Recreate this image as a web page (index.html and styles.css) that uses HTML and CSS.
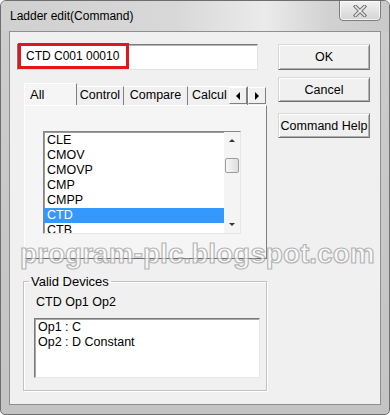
FILE: index.html
```html
<!DOCTYPE html>
<html lang="en">
<head>
    <meta charset="UTF-8">
    <meta name="viewport" content="width=device-width, initial-scale=1.0">
    <title>Ladder edit(Command)</title>
    <link rel="stylesheet" href="styles.css">
</head>
<body>
    <div class="window">
        <div class="titlebar">
            <span class="title">Ladder edit(Command)</span>
            <button class="close" aria-label="Close">
                <svg width="14" height="12" viewBox="0 0 14 12">
                    <path d="M2.5 1.5 L11.5 10.5 M11.5 1.5 L2.5 10.5" stroke="#6d6d6d" stroke-width="3.6" stroke-linecap="square" fill="none"/>
                    <path d="M2.5 1.5 L11.5 10.5 M11.5 1.5 L2.5 10.5" stroke="#ececec" stroke-width="1.6" stroke-linecap="square" fill="none"/>
                </svg>
            </button>
        </div>

        <div class="client">
            <div class="main-col">
                <div class="command-field">
                    <input class="command" type="text" value="CTD C001 00010">
                    <span class="highlight"></span>
                </div>

                <div class="tabs">
                    <div class="tab-strip">
                        <div class="tab active">All</div>
                        <div class="tab tab-control">Control</div>
                        <div class="tab tab-compare">Compare</div>
                        <div class="tab tab-calcul">Calcul</div>
                        <div class="tab-scroll">
                            <span class="arrow-btn"><span class="tri-left"></span></span>
                            <span class="arrow-btn"><span class="tri-right"></span></span>
                        </div>
                    </div>
                    <div class="tab-panel">
                        <div class="listbox">
                            <ul class="items">
                                <li>CLE</li>
                                <li>CMOV</li>
                                <li>CMOVP</li>
                                <li>CMP</li>
                                <li>CMPP</li>
                                <li class="selected">CTD</li>
                                <li>CTB</li>
                            </ul>
                            <div class="scrollbar">
                                <span class="sb-btn"><span class="tri-up"></span></span>
                                <div class="sb-track"><span class="thumb"></span></div>
                                <span class="sb-btn"><span class="tri-down"></span></span>
                            </div>
                        </div>
                    </div>
                </div>

                <fieldset class="devices">
                    <legend>Valid Devices</legend>
                    <p class="syntax">CTD Op1 Op2</p>
                    <div class="ops">
                        <div>Op1 : C</div>
                        <div>Op2 : D Constant</div>
                    </div>
                </fieldset>
            </div>

            <div class="buttons">
                <button class="btn">OK</button>
                <button class="btn btn-cancel">Cancel</button>
                <button class="btn btn-help">Command Help</button>
            </div>
        </div>

        <div class="watermark">program-plc.blogspot.com</div>
    </div>
</body>
</html>
```

FILE: styles.css
```css
body {
    margin: 0;
    font-family: "Liberation Sans", Arial, sans-serif;
    font-size: 12px;
    color: #000;
    background: #fff;
}

.window {
    position: relative;
    width: 388px;
    height: 413px;
    border: 1px solid #6e6e6e;
    border-radius: 6px 6px 5px 5px;
    background: linear-gradient(#cdcdcd, #c4c4c4);
    overflow: hidden;
    display: flex;
    flex-direction: column;
}

.titlebar {
    height: 30px;
    display: flex;
    justify-content: space-between;
    align-items: flex-start;
    padding-left: 9px;
    background: linear-gradient(to right, #d0d0d0, #d8d8d8 45%, #ebebeb 68%, #d2d2d2 84%, #c9c9c9);
}

.title {
    font-size: 12px;
    line-height: 30px;
}

.close {
    width: 42px;
    height: 21px;
    margin: -1px 8px 0 0;
    padding: 0;
    border: 1px solid #7d7d7d;
    border-radius: 0 0 4px 4px;
    background: linear-gradient(#f2f2f2, #d4d4d4);
    box-shadow: inset 0 0 0 1px rgba(255, 255, 255, 0.7);
    display: flex;
    align-items: center;
    justify-content: center;
}

.client {
    box-sizing: border-box;
    height: 374px;
    margin: 0 8px;
    border: 1px solid #8f8f8f;
    background: #f0f0f0;
    display: flex;
    gap: 11px;
    padding: 12px 0 0 7px;
}

.main-col {
    width: 250px;
    display: flex;
    flex-direction: column;
}

/* command line */
.command-field {
    position: relative;
    width: 241px;
}

.command {
    box-sizing: border-box;
    width: 241px;
    height: 26px;
    margin: 0;
    padding: 0 0 3px 8px;
    border: 1px solid;
    border-color: #7a7a7a #e2e2e2 #e2e2e2 #7a7a7a;
    box-shadow: inset 1px 1px 0 #b4b4b4;
    background: #fff;
    font-family: inherit;
    font-size: 12px;
    color: #000;
    outline: none;
}

.highlight {
    position: absolute;
    left: 1px;
    top: -1px;
    width: 111px;
    height: 26px;
    box-sizing: border-box;
    border: 3px solid #e3161d;
}

/* tab control */
.tabs {
    width: 243px;
    margin: 13px 0 0 7px;
}

.tab-strip {
    position: relative;
    height: 22px;
    display: flex;
    align-items: flex-end;
    overflow: hidden;
}

.tab {
    box-sizing: border-box;
    height: 19px;
    line-height: 17px;
    font-size: 12.5px;
    text-align: center;
    white-space: nowrap;
    border-top: 1px solid #fff;
    border-right: 1px solid #7f7f7f;
    flex-shrink: 0;
}

.tab.active {
    position: relative;
    z-index: 1;
    width: 53px;
    height: 23px;
    margin-bottom: -1px;
    padding-left: 5px;
    text-align: left;
    line-height: 22px;
    font-size: 13px;
    border-left: 1px solid #fff;
    background: #f5f5f5;
}

.tab-control {
    width: 47px;
}

.tab-compare {
    width: 64px;
}

.tab-calcul {
    width: 60px;
    text-align: left;
    padding-left: 4px;
}

.tab-scroll {
    position: absolute;
    left: 205px;
    top: 4px;
    display: flex;
    z-index: 2;
}

.arrow-btn {
    box-sizing: border-box;
    width: 18px;
    height: 17px;
    margin-right: 1px;
    background: #f0f0f0;
    border: 1px solid;
    border-color: #fff #7f7f7f #7f7f7f #fff;
    display: flex;
    align-items: center;
    justify-content: center;
}

.tri-left {
    border-style: solid;
    border-width: 4px 4px 4px 0;
    border-color: transparent #000 transparent transparent;
}

.tri-right {
    border-style: solid;
    border-width: 4px 0 4px 4px;
    border-color: transparent transparent transparent #000;
}

.tab-panel {
    box-sizing: border-box;
    height: 154px;
    border: 1px solid;
    border-color: #fff #7f7f7f #6a6a6a #fff;
    background: #f5f5f5;
    padding: 25px 0 0 18px;
}

.listbox {
    box-sizing: border-box;
    width: 198px;
    height: 103px;
    border: 1px solid;
    border-color: #858585 #e6e6e6 #e6e6e6 #858585;
    box-shadow: inset 1px 1px 0 #9a9a9a;
    background: #fff;
    display: flex;
    overflow: hidden;
}

.items {
    flex: 1;
    list-style: none;
    margin: 0;
    padding: 1px 0 0;
}

.items li {
    height: 15px;
    line-height: 15px;
    padding-left: 3px;
    font-size: 12.5px;
}

.items li.selected {
    background: #3399ff;
    color: #fff;
}

.scrollbar {
    width: 16px;
    display: flex;
    flex-direction: column;
    background: #f4f4f4;
}

.sb-btn {
    height: 17px;
    display: flex;
    align-items: center;
    justify-content: center;
}

.tri-up {
    border-style: solid;
    border-width: 0 3px 3px 3px;
    border-color: transparent transparent #333 transparent;
}

.tri-down {
    border-style: solid;
    border-width: 3px 3px 0 3px;
    border-color: #333 transparent transparent transparent;
}

.sb-track {
    flex: 1;
    padding-top: 9px;
}

.thumb {
    display: block;
    box-sizing: border-box;
    width: 14px;
    height: 15px;
    margin-left: 1px;
    border: 1px solid #9c9c9c;
    border-radius: 2px;
    background: linear-gradient(to right, #f7f7f7, #dedede);
}

/* valid devices group */
.devices {
    width: 244px;
    box-sizing: border-box;
    margin: 15px 0 0 6px;
    padding: 0 0 12px;
    border: 1px solid #c2c2c2;
    box-shadow: inset 1px 1px 0 #fff, 1px 1px 0 #fff;
    min-width: 0;
}

.devices legend {
    margin-left: 5px;
    padding: 0 2px;
    font-size: 13px;
    line-height: 15px;
}

.syntax {
    margin: 6px 0 0 12px;
    line-height: 15px;
    font-size: 12.5px;
}

.ops {
    box-sizing: border-box;
    width: 226px;
    height: 60px;
    margin: 8px 0 0 10px;
    border: 1px solid;
    border-color: #7a7a7a #e6e6e6 #e6e6e6 #7a7a7a;
    box-shadow: inset 1px 1px 0 #a8a8a8;
    background: #fff;
    padding: 1px 0 0 3px;
    line-height: 15px;
    font-size: 12.5px;
}

/* buttons */
.buttons {
    width: 92px;
    display: flex;
    flex-direction: column;
}

.btn {
    box-sizing: border-box;
    height: 26px;
    margin: 0;
    padding: 0;
    font-family: inherit;
    font-size: 12.5px;
    color: #000;
    background: #f0f0f0;
    border: 1px solid;
    border-color: #d8d8d8 #7d7d7d #6d6d6d #d8d8d8;
    box-shadow: inset 1px 1px 0 #fff, inset -1px -1px 0 #b0b0b0;
}

.btn-cancel {
    height: 25px;
    margin-top: 7px;
}

.btn-help {
    height: 25px;
    margin-top: 11px;
}

.watermark {
    position: absolute;
    left: 19px;
    top: 237px;
    font-family: "Liberation Sans", Arial, sans-serif;
    font-weight: bold;
    font-size: 28px;
    line-height: 32px;
    color: rgba(255, 255, 255, 0.6);
    -webkit-text-stroke: 1.2px rgba(150, 150, 150, 0.7);
    white-space: nowrap;
    pointer-events: none;
}
```
